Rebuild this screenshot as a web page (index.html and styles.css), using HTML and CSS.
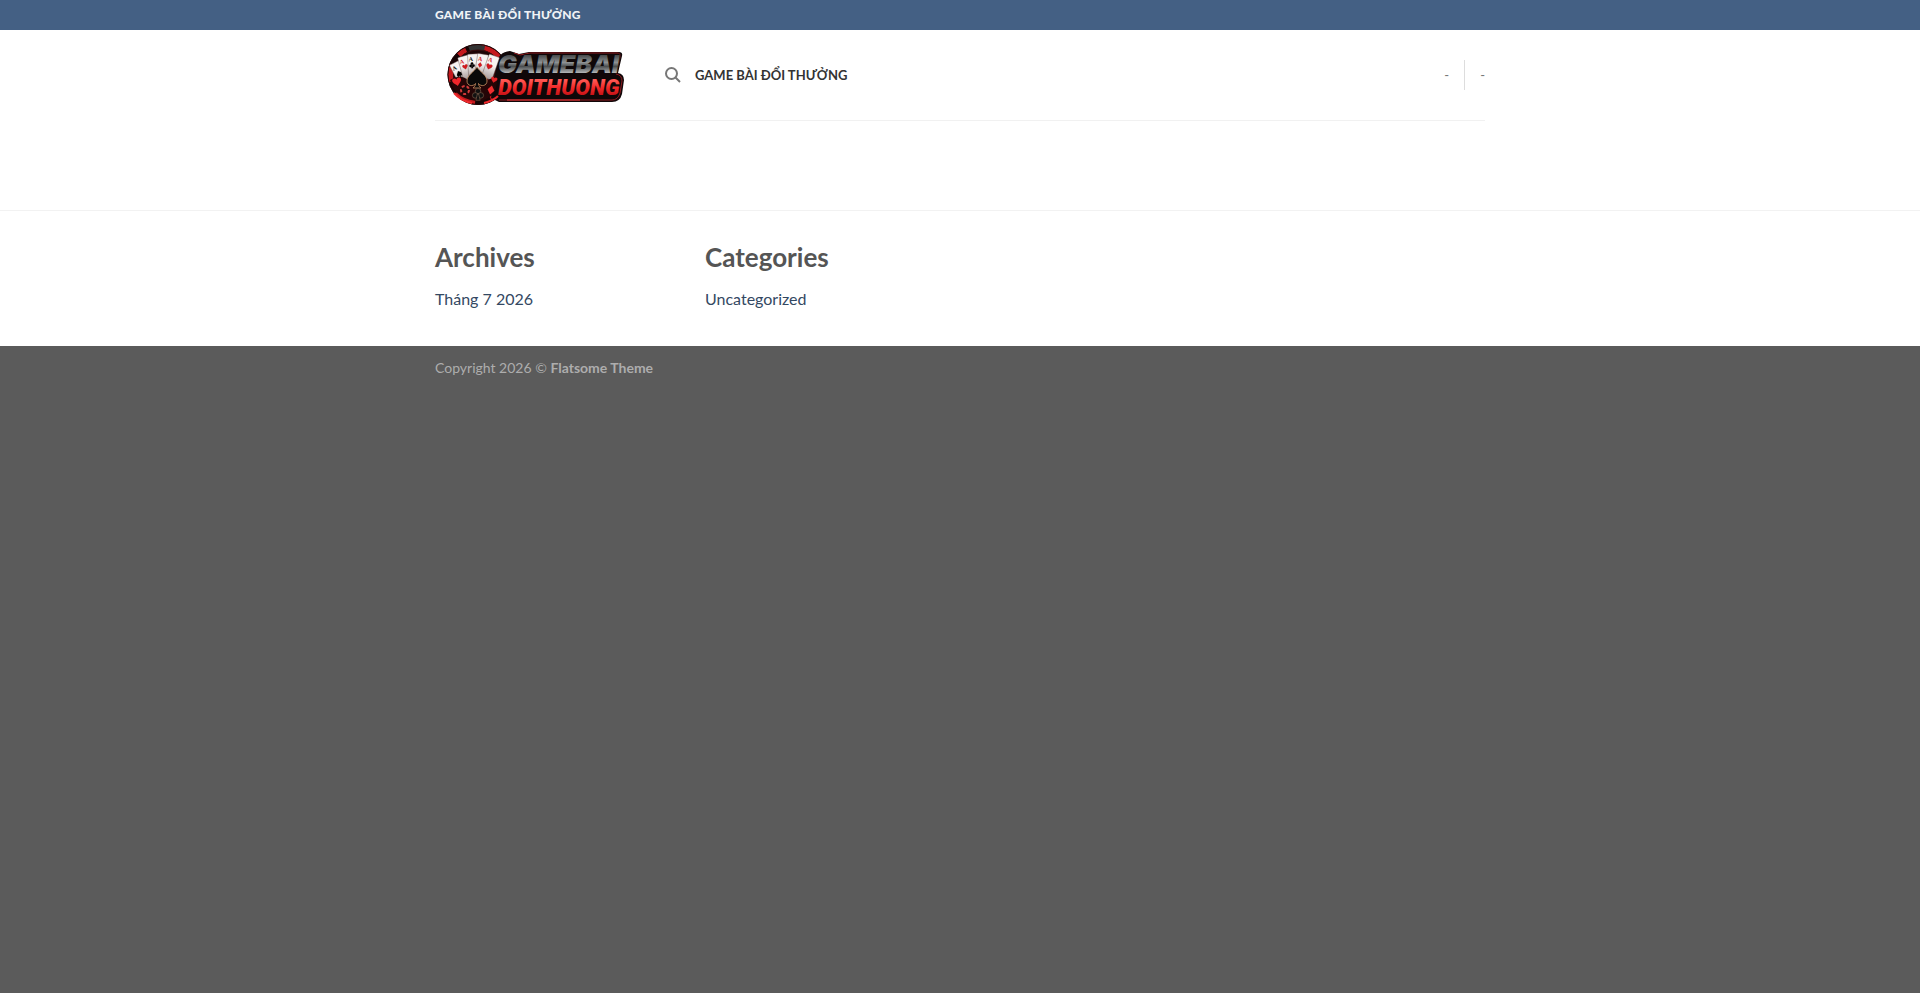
FILE: index.html
```html
<!DOCTYPE html>
<html lang="vi">
<head>
    <meta charset="UTF-8">
    <meta name="viewport" content="width=device-width, initial-scale=1.0">
    <title>Game Bài Đổi Thưởng</title>
    <link rel="stylesheet" href="styles.css">
</head>
<body>

    <header class="header">
        <div class="top-bar">
            <div class="container">
                <strong class="top-bar-text">Game bài đổi thưởng</strong>
            </div>
        </div>

        <div class="container">
            <div class="header-main">
                <a href="#" class="logo" aria-label="Game Bai Doi Thuong">
                    <svg width="200" height="90" viewBox="0 0 200 90">
                        <defs>
                            <linearGradient id="silver" x1="0" y1="0" x2="0" y2="1">
                                <stop offset="0.2" stop-color="#45484a"/>
                                <stop offset="0.45" stop-color="#8d9193"/>
                                <stop offset="0.58" stop-color="#4b4e50"/>
                                <stop offset="0.8" stop-color="#b4b7b8"/>
                            </linearGradient>
                            <linearGradient id="red" x1="0" y1="0" x2="0" y2="1">
                                <stop offset="0.2" stop-color="#ff5a55"/>
                                <stop offset="0.5" stop-color="#f12a2a"/>
                                <stop offset="0.85" stop-color="#c01014"/>
                            </linearGradient>
                            <radialGradient id="chip">
                                <stop offset="0.3" stop-color="#5a0a0c"/>
                                <stop offset="0.75" stop-color="#1c0506"/>
                                <stop offset="1" stop-color="#120304"/>
                            </radialGradient>
                            <linearGradient id="card" x1="0" y1="0" x2="0" y2="1">
                                <stop offset="0.4" stop-color="#f7f3f1"/>
                                <stop offset="1" stop-color="#a89c9b"/>
                            </linearGradient>
                            <path id="spade" d="M0 -10C3 -5 10 -2 10 4C10 9 4 10 1.500 6.500C1.500 9 3 10 4 11H-4C-3 10 -1.500 9 -1.500 6.500C-4 10 -10 9 -10 4C-10 -2 -3 -5 0 -10Z"/>
                            <path id="heart" d="M0 8C-3 4 -9 1 -9 -4C-9 -9 -2 -10 0 -5C2 -10 9 -9 9 -4C9 1 3 4 0 8Z"/>
                            <path id="diamond" d="M0 -9L7 0L0 9L-7 0Z"/>
                            <g id="club">
                                <circle cy="-4" r="4"/>
                                <circle cx="-4" cy="2" r="4"/>
                                <circle cx="4" cy="2" r="4"/>
                                <path d="M-1 0H1L3 9H-3Z"/>
                            </g>
                        </defs>

                        <!-- poker chip -->
                        <g>
                            <circle cx="43" cy="44.500" r="30.500" fill="url(#chip)"/>
                            <circle cx="43" cy="44.500" r="27.500" fill="none" stroke="#c4191d" stroke-width="5" stroke-dasharray="17 12 9 16 21 12" stroke-dashoffset="8"/>
                            <path d="M33 16Q42 13 50 16L49 21Q42 19 35 21Z" fill="#333"/>
                            <circle cx="43" cy="44.500" r="30" fill="none" stroke="#250607"/>
                            <circle cx="43" cy="44.500" r="24.500" fill="none" stroke="#3a0b0c"/>
                        </g>

                        <!-- plate behind the name -->
                        <path d="M62 34Q63 22 75 21L84 24L94 22H184Q188 22 187 26L183 43Q189 44 189 50L187 64Q185 72 177 72H64L56 68L60 46Z" fill="#100708"/>
                        <path d="M79 23L85 25L95 23H182Q186 23 185 27L181 44Q187 45 187 51L185 63Q183 70 177 70H64" fill="none" stroke="#8f1c20"/>
                        <path d="M72 70H145" stroke="#ef3a3d"/>

                        <!-- fan of aces -->
                        <g stroke="#5c4a49" stroke-width="0.4">
                            <g transform="translate(23 41) rotate(-27)">
                                <rect x="-5" y="-9" width="11" height="21" rx="1" fill="url(#card)"/>
                                <text class="ace" x="-4" y="-2">A</text>
                                <use href="#spade" transform="translate(0 3) scale(0.3)"/>
                            </g>
                            <g transform="translate(30 36) rotate(-15)">
                                <rect x="-5" y="-10" width="11" height="23" rx="1" fill="url(#card)"/>
                                <text class="ace ace-red" x="-4" y="-3">A</text>
                                <use href="#heart" transform="translate(0 1) scale(0.3)" fill="#d3191d"/>
                            </g>
                            <g transform="translate(38 34) rotate(-3)">
                                <rect x="-5" y="-10" width="11" height="23" rx="1" fill="url(#card)"/>
                                <text class="ace" x="-4" y="-3">A</text>
                                <use href="#club" transform="translate(-1 1) scale(0.35)"/>
                            </g>
                            <g transform="translate(46 35) rotate(9)">
                                <rect x="-5" y="-11" width="11" height="23" rx="1" fill="url(#card)"/>
                                <text class="ace ace-red" x="-4" y="-4">A</text>
                                <use href="#diamond" transform="translate(-1 0) scale(0.3)" fill="#d3191d"/>
                            </g>
                            <g transform="translate(55 37) rotate(19)">
                                <rect x="-5" y="-12" width="11" height="24" rx="1" fill="url(#card)"/>
                                <text class="ace ace-red" x="-4" y="-5">A</text>
                                <use href="#heart" transform="translate(-1 0) scale(0.34)" fill="#d3191d"/>
                            </g>
                        </g>

                        <path d="M15 50Q26 43 34 51L52 51Q58 46 62 48Q63 66 46 71Q21 71 15 50Z" fill="#250506"/>
                        <use href="#spade" transform="translate(42 47)" fill="#090909" stroke="#c69063" stroke-width="0.8"/>
                        <use href="#heart" transform="translate(22 52) rotate(-12) scale(0.5)" fill="#ee262b"/>
                        <use href="#heart" transform="translate(59 50) rotate(15) scale(0.35)" fill="#e02226"/>
                        <use href="#diamond" transform="translate(56 60) rotate(12) scale(0.5)" fill="#ef2e30"/>
                        <use href="#club" transform="translate(43 64) scale(0.7)" fill="#111" stroke="#99745a" stroke-width="0.7"/>
                        <circle cx="30" cy="60" r="4" fill="#18090a" stroke="#d33a39" stroke-width="2" stroke-dasharray="3 2"/>
                        <path d="M19 63Q26 71 37 73M49 73Q58 71 63 66" fill="none" stroke="#ef2a2d" stroke-width="2"/>

                        <text class="logo-name" x="63" y="43">GAMEBAI</text>
                        <text class="logo-sub" x="63" y="65">DOITHUONG</text>
                    </svg>
                </a>

                <nav class="nav">
                    <a href="#" class="nav-search" aria-label="Search">
                        <svg width="16" height="16" viewBox="0 0 16 16" fill="none" stroke="currentColor" stroke-width="2">
                            <circle cx="6.500" cy="6.500" r="5.500"/>
                            <path d="M10.500 10.500L15 15"/>
                        </svg>
                    </a>
                    <a href="#" class="nav-link">Game bài đổi thưởng</a>
                </nav>

                <ul class="nav-right">
                    <li>-</li>
                    <li class="nav-divider"></li>
                    <li>-</li>
                </ul>
            </div>
        </div>
    </header>

    <main class="content"></main>

    <footer class="footer">
        <div class="footer-widgets">
            <div class="container widget-row">
                <div class="widget">
                    <h2>Archives</h2>
                    <ul>
                        <li><a href="#">Tháng 7 2026</a></li>
                    </ul>
                </div>
                <div class="widget">
                    <h2>Categories</h2>
                    <ul>
                        <li><a href="#">Uncategorized</a></li>
                    </ul>
                </div>
            </div>
        </div>

        <div class="footer-bottom">
            <div class="container">
                Copyright 2026 © <strong>Flatsome Theme</strong>
            </div>
        </div>
    </footer>

</body>
</html>
```
FILE: styles.css
```css
* {
    box-sizing: border-box;
}

body {
    margin: 0;
    font-family: Lato, sans-serif;
    font-size: 16px;
    line-height: 26px;
    color: #777;
    background-color: #5b5b5b;
}

a {
    color: #334862;
    text-decoration: none;
}

ul {
    list-style: none;
    margin: 0;
    padding: 0;
}

.container {
    width: 100%;
    max-width: 1080px;
    margin: 0 auto;
    padding: 0 15px;
}

.header {
    background-color: #fff;
}

.top-bar {
    display: flex;
    align-items: center;
    min-height: 30px;
    background-color: #446084;
}

.top-bar-text {
    display: block;
    font-size: 12px;
    font-weight: 900;
    line-height: 16px;
    letter-spacing: 0.02em;
    text-transform: uppercase;
    color: #f0f3f6;
}

.header-main {
    display: flex;
    align-items: center;
    border-bottom: 1px solid #f1f1f1;
}

.logo {
    margin-right: 30px;
}

.logo svg {
    display: block;
}

.logo-name,
.logo-sub {
    font-style: italic;
    font-weight: 900;
    stroke: #0b0808;
    stroke-width: 1px;
    paint-order: stroke;
}

.logo-name {
    font-family: Inter, sans-serif;
    font-size: 25px;
    fill: url(#silver);
}

.logo-sub {
    font-family: Roboto, sans-serif;
    font-size: 22px;
    fill: url(#red);
}

.ace {
    font-family: "Liberation Serif", serif;
    font-size: 6px;
    font-weight: bold;
    fill: #111;
    stroke: none;
}

.ace-red {
    fill: #d3191d;
}

.nav {
    display: flex;
    align-items: center;
    gap: 14px;
}

.nav-search {
    color: #777;
}

.nav-search svg {
    display: block;
}

.nav-link {
    font-size: 13px;
    font-weight: bold;
    line-height: 16px;
    text-transform: uppercase;
    color: #333;
}

.nav-right {
    display: flex;
    align-items: center;
    gap: 15px;
    margin-left: auto;
    font-size: 13px;
}

.nav-divider {
    height: 30px;
    border-left: 1px solid #ddd;
}

.content {
    min-height: 89px;
    background-color: #fff;
}

.footer-widgets {
    padding: 30px 0;
    border-top: 1px solid #f2f2f2;
    background-color: #fff;
}

.widget-row {
    display: grid;
    grid-template-columns: repeat(4, 1fr);
    gap: 30px;
}

.widget h2 {
    margin: 0 0 13px;
    font-size: 26px;
    line-height: 32px;
    color: #555;
}

.widget ul {
    padding-bottom: 4px;
}

.widget li {
    line-height: 26px;
}

.footer-bottom {
    padding: 10px 0 15px;
    font-size: 14px;
    line-height: 24px;
    color: #adadad;
}
```
